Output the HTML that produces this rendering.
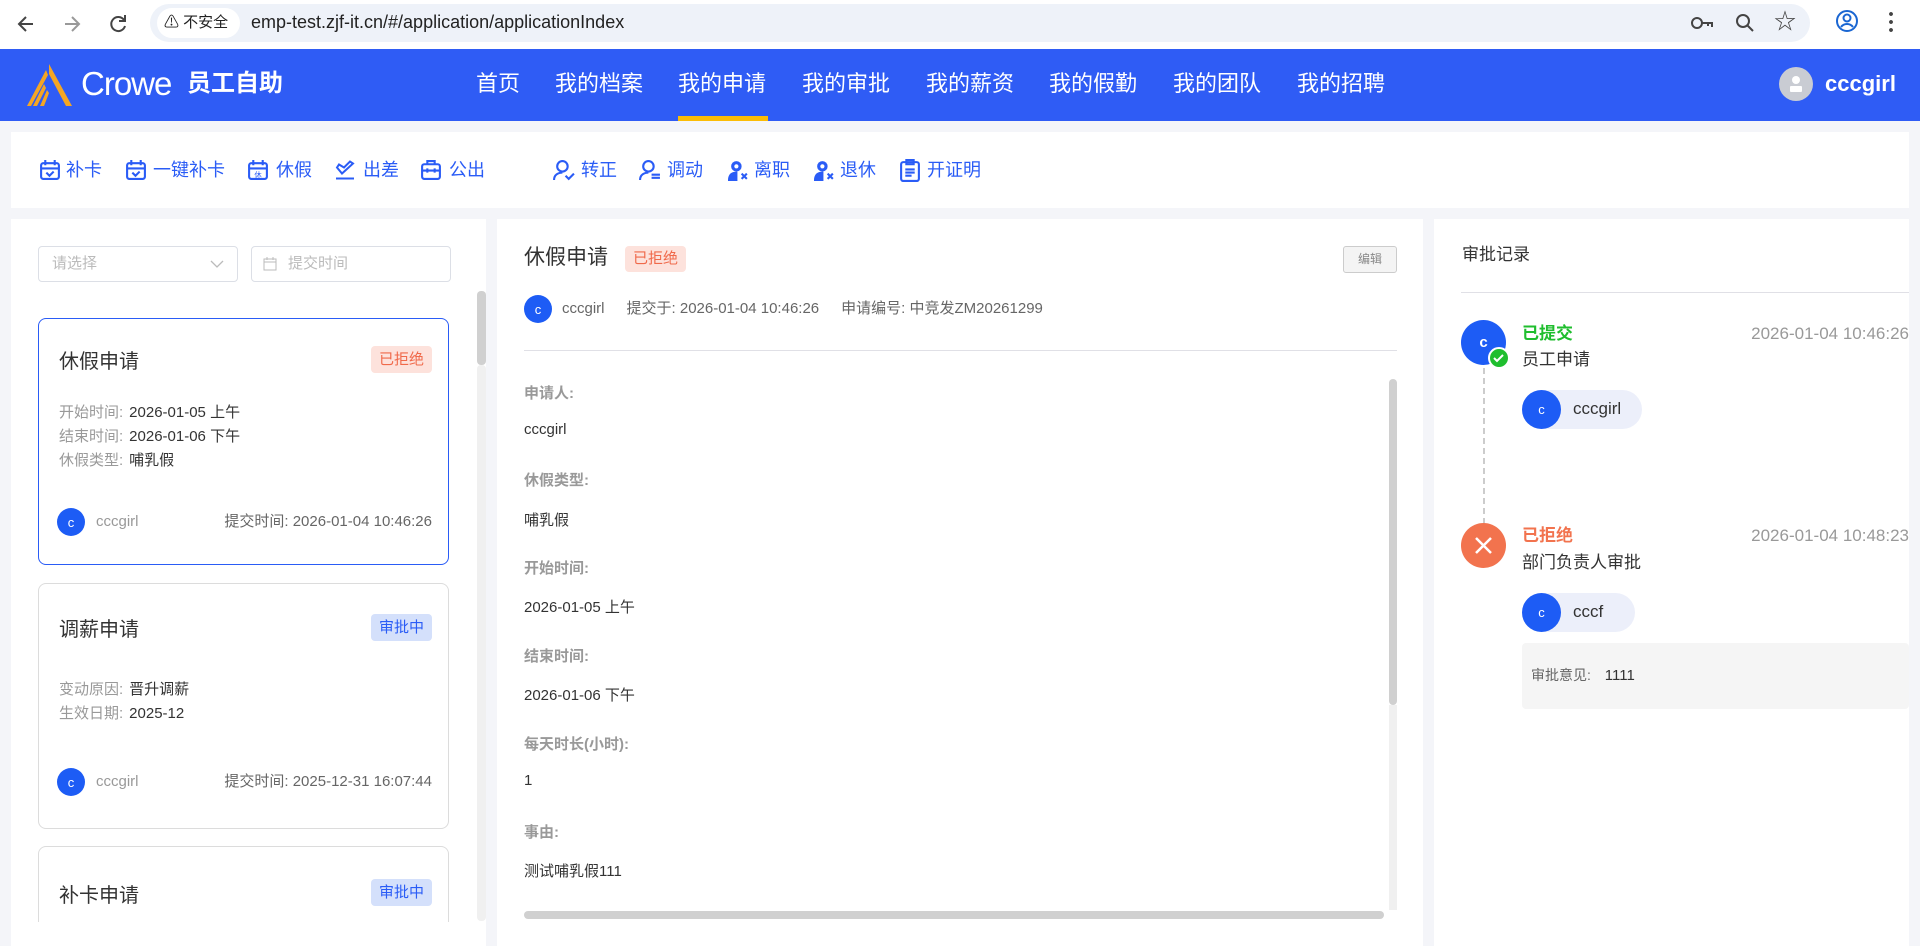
<!DOCTYPE html>
<html><head><meta charset="utf-8"><style>
*{box-sizing:border-box;margin:0;padding:0}
html,body{width:1920px;height:946px;overflow:hidden}
body{background:#f4f5f9;font-family:"Liberation Sans","Noto Sans CJK SC",sans-serif;color:#333;position:relative}
.abs{position:absolute}
.chrome{left:0;top:0;width:1920px;height:49px;background:#fff}
.addr{left:150px;top:4px;width:1660px;height:38px;background:#eef2f9;border-radius:19px}
.hdr{left:0;top:49px;width:1920px;height:72px;background:#2f5cf5}
.nav{top:68px;color:#fff;font-size:22px;line-height:32px}
.tb{left:11px;top:132px;width:1898px;height:76px;background:#fff}
.ti{top:157px;color:#2a5cf6;font-size:18px;line-height:26px;height:26px}
.ti svg{position:absolute;top:2px}
.ti span{position:absolute;white-space:nowrap}
.panel{background:#fff}
.card{left:38px;width:411px;border:1px solid #dcdcdc;border-radius:8px;background:#fff}
.card.sel{border-color:#2a5cf6}
.ct{position:absolute;left:20px;font-size:20px;color:#333}
.badge{position:absolute;font-size:15px;border-radius:4px;padding:0 8px;line-height:27px}
.red{background:#fde2dc;color:#f0694a}
.blue{background:#d4e0fb;color:#2a5cf6}
.f{position:absolute;left:20px;font-size:15px;line-height:24px;color:#999}
.f b{font-weight:normal;color:#333;margin-left:6px}
.av{border-radius:50%;background:#1d5cf5;color:#fff;display:flex;align-items:center;justify-content:center;font-size:13px}
.lab{left:524px;font-size:15px;color:#999;font-weight:bold}
.val{left:524px;font-size:15px;color:#333}
</style></head><body>
<div class="abs chrome"></div>
<div class="abs addr"></div>
<svg class="abs" style="left:14px;top:12px" width="24" height="24" viewBox="0 0 24 24"><path d="M19 12H6M12 5l-7 7 7 7" fill="none" stroke="#444" stroke-width="2"/></svg>
<svg class="abs" style="left:60px;top:12px" width="24" height="24" viewBox="0 0 24 24"><path d="M5 12h13M12 5l7 7-7 7" fill="none" stroke="#999" stroke-width="2"/></svg>
<svg class="abs" style="left:106px;top:12px" width="24" height="24" viewBox="0 0 24 24"><path d="M18 8a7 7 0 1 0 1 6" fill="none" stroke="#444" stroke-width="2"/><path d="M19 3v6h-6" fill="none" stroke="#444" stroke-width="2"/></svg>
<div class="abs" style="left:157px;top:8px;width:83px;height:30px;background:#fff;border-radius:15px"></div>
<div class="abs" style="left:164px;top:12px;font-size:15px;line-height:22px;color:#222">⚠ 不安全</div>
<div class="abs" style="left:251px;top:10px;font-size:18px;line-height:24px;color:#222">emp-test.zjf-it.cn/#/application/applicationIndex</div>
<svg class="abs" style="left:1690px;top:14px" width="24" height="18" viewBox="0 0 24 18"><circle cx="7" cy="9" r="5" fill="none" stroke="#444" stroke-width="2"/><path d="M12 9h10v4M18 9v3" fill="none" stroke="#444" stroke-width="2"/></svg>
<svg class="abs" style="left:1734px;top:12px" width="22" height="22" viewBox="0 0 22 22"><circle cx="9" cy="9" r="6" fill="none" stroke="#444" stroke-width="2"/><path d="M13 13l6 6" stroke="#444" stroke-width="2"/></svg>
<div class="abs" style="left:1774px;top:7px;font-size:22px;line-height:30px;color:#444">☆</div>
<svg class="abs" style="left:1834px;top:8px" width="26" height="26" viewBox="0 0 26 26"><circle cx="13" cy="13" r="10" fill="none" stroke="#1a66d2" stroke-width="2"/><circle cx="13" cy="10" r="3.5" fill="none" stroke="#1a66d2" stroke-width="2"/><path d="M7 19c3-4 9-4 12 0" fill="none" stroke="#1a66d2" stroke-width="2"/></svg>
<div class="abs" style="left:1889px;top:10px;width:4px;height:24px;background:radial-gradient(circle,#444 1.8px,transparent 2px) 0 0/4px 8px"></div>

<div class="abs hdr"></div>
<svg class="abs" style="left:24px;top:62px" width="50" height="46" viewBox="0 0 50 46"><path d="M25 2L48 44H42L25 12Z" fill="#f5a623"/><path d="M22 8L3 44h4L24 13Z" fill="#f5a623"/><path d="M20 22L9 44h4l9-18Z" fill="#f5a623"/><path d="M23 28L16 44h4l5-13Z" fill="#f5a623"/></svg>
<div class="abs" style="left:81px;top:64px;font-size:33px;line-height:40px;color:#fff;letter-spacing:-1px">Crowe</div>
<div class="abs" style="left:187px;top:68px;font-size:24px;line-height:32px;color:#fff;font-weight:bold">员工自助</div>
<div class="abs nav" style="left:476px">首页</div>
<div class="abs nav" style="left:555px">我的档案</div>
<div class="abs nav" style="left:678px">我的申请</div>
<div class="abs" style="left:678px;top:116px;width:90px;height:5px;background:#fbbc05"></div>
<div class="abs nav" style="left:802px">我的审批</div>
<div class="abs nav" style="left:926px">我的薪资</div>
<div class="abs nav" style="left:1049px">我的假勤</div>
<div class="abs nav" style="left:1173px">我的团队</div>
<div class="abs nav" style="left:1297px">我的招聘</div>
<div class="abs" style="left:1779px;top:67px;width:34px;height:34px;border-radius:50%;background:#c9ccd3"></div>
<svg class="abs" style="left:1787px;top:74px" width="18" height="20" viewBox="0 0 18 20"><circle cx="9" cy="6" r="4" fill="#fff"/><rect x="3" y="12" width="12" height="6" rx="1" fill="#fff"/></svg>
<div class="abs" style="left:1825px;top:69px;font-size:22px;line-height:30px;color:#fff;font-weight:bold">cccgirl</div>

<div class="abs tb"></div>
<div class="abs ti" style="left:39px"><svg width="22" height="22" viewBox="0 0 21 21"><rect x="2" y="4" width="17" height="15" rx="2" fill="none" stroke="#2a5cf6" stroke-width="2"/><path d="M6 1v5M15 1v5M2 9h17M7 13l3 3 4-4" fill="none" stroke="#2a5cf6" stroke-width="2"/></svg><span style="left:27px">补卡</span></div>
<div class="abs ti" style="left:125px"><svg width="22" height="22" viewBox="0 0 21 21"><rect x="2" y="4" width="17" height="15" rx="2" fill="none" stroke="#2a5cf6" stroke-width="2"/><path d="M6 1v5M15 1v5M2 9h17M7 13l3 3 4-4" fill="none" stroke="#2a5cf6" stroke-width="2"/></svg><span style="left:28px">一键补卡</span></div>
<div class="abs ti" style="left:247px"><svg width="22" height="22" viewBox="0 0 21 21"><rect x="2" y="4" width="17" height="15" rx="2" fill="none" stroke="#2a5cf6" stroke-width="2"/><path d="M6 1v5M15 1v5M2 9h17" fill="none" stroke="#2a5cf6" stroke-width="2"/><text x="10.5" y="17.5" font-size="7" fill="#2a5cf6" text-anchor="middle" font-family="Noto Sans CJK SC">休</text></svg><span style="left:29px">休假</span></div>
<div class="abs ti" style="left:334px"><svg width="22" height="22" viewBox="0 0 22 21"><path d="M3 8l5 6 11-10-3-2-6 6-5-3z" fill="none" stroke="#2a5cf6" stroke-width="2"/><path d="M2 19h18" stroke="#2a5cf6" stroke-width="2"/></svg><span style="left:29px">出差</span></div>
<div class="abs ti" style="left:420px"><svg width="22" height="22" viewBox="0 0 21 21"><rect x="2" y="5" width="17" height="14" rx="2" fill="none" stroke="#2a5cf6" stroke-width="2"/><path d="M7 5V2h7v3M2 11h17M7 9v4M14 9v4" fill="none" stroke="#2a5cf6" stroke-width="2"/></svg><span style="left:29px">公出</span></div>
<div class="abs ti" style="left:553px"><svg width="22" height="22" viewBox="0 0 21 21"><circle cx="9" cy="7" r="5" fill="none" stroke="#2a5cf6" stroke-width="2"/><path d="M1 20c0-5 4-7 8-7M12 16l3 3 5-5" fill="none" stroke="#2a5cf6" stroke-width="2"/></svg><span style="left:28px">转正</span></div>
<div class="abs ti" style="left:639px"><svg width="22" height="22" viewBox="0 0 21 21"><circle cx="9" cy="7" r="5" fill="none" stroke="#2a5cf6" stroke-width="2"/><path d="M1 20c0-5 4-7 8-7M12 15h8M12 18h8" fill="none" stroke="#2a5cf6" stroke-width="2"/></svg><span style="left:28px">调动</span></div>
<div class="abs ti" style="left:728px"><svg width="22" height="22" viewBox="0 0 21 21"><circle cx="8" cy="7" r="5" fill="#2a5cf6"/><path d="M1 20c0-5 3-7 7-7v7zM13 14l5 5M18 14l-5 5" fill="#2a5cf6" stroke="#2a5cf6" stroke-width="2"/><circle cx="8" cy="7" r="2" fill="#fff"/></svg><span style="left:26px">离职</span></div>
<div class="abs ti" style="left:814px"><svg width="22" height="22" viewBox="0 0 21 21"><circle cx="8" cy="7" r="5" fill="#2a5cf6"/><path d="M1 20c0-5 3-7 7-7v7zM13 14l5 5M18 14l-5 5" fill="#2a5cf6" stroke="#2a5cf6" stroke-width="2"/><circle cx="8" cy="7" r="2" fill="#fff"/></svg><span style="left:26px">退休</span></div>
<div class="abs ti" style="left:899px"><svg width="22" height="23" viewBox="0 0 21 22"><rect x="2" y="3" width="17" height="18" rx="2" fill="none" stroke="#2a5cf6" stroke-width="2"/><path d="M7 1h7v4H7zM6 10h9M6 13h9M6 16h6" fill="none" stroke="#2a5cf6" stroke-width="2"/></svg><span style="left:28px">开证明</span></div>

<!-- left panel -->
<div class="abs panel" style="left:11px;top:219px;width:475px;height:727px"></div>
<div class="abs" style="left:38px;top:246px;width:200px;height:36px;border:1px solid #dcdfe6;border-radius:4px;font-size:15px;color:#bbb;line-height:34px;padding-left:13px">请选择</div>
<svg class="abs" style="left:210px;top:259px" width="14" height="10" viewBox="0 0 14 10"><path d="M1 2l6 6 6-6" fill="none" stroke="#bbb" stroke-width="1.3"/></svg>
<div class="abs" style="left:251px;top:246px;width:200px;height:36px;border:1px solid #dcdfe6;border-radius:4px;font-size:15px;color:#bbb;line-height:34px;padding-left:36px">提交时间</div>
<svg class="abs" style="left:263px;top:257px" width="14" height="14" viewBox="0 0 14 14"><rect x="1" y="2" width="12" height="11" fill="none" stroke="#bbb"/><path d="M1 5h12M4 0v3M10 0v3" stroke="#bbb"/></svg>
<div class="abs" style="left:477px;top:291px;width:9px;height:74px;background:#d0d0d0;border-radius:4px"></div>
<div class="abs" style="left:477px;top:365px;width:9px;height:556px;background:#f0f0f0;border-radius:4px"></div>
<div class="abs" style="left:11px;top:219px;width:475px;height:703px;overflow:hidden">
<div class="abs card sel" style="left:27px;top:99px;height:247px">
 <div class="ct" style="top:26px">休假申请</div>
 <div class="badge red" style="right:16px;top:27px">已拒绝</div>
 <div class="f" style="top:82px">开始时间:<b>2026-01-05 上午</b></div>
 <div class="f" style="top:106px">结束时间:<b>2026-01-06 下午</b></div>
 <div class="f" style="top:130px">休假类型:<b>哺乳假</b></div>
 <div class="abs av" style="left:18px;top:189px;width:28px;height:28px">c</div>
 <div class="f" style="left:57px;top:191px">cccgirl</div>
 <div class="f" style="left:auto;right:16px;top:191px;color:#666">提交时间: 2026-01-04 10:46:26</div>
</div>
<div class="abs card" style="left:27px;top:364px;height:246px">
 <div class="ct" style="top:29px">调薪申请</div>
 <div class="badge blue" style="right:16px;top:30px">审批中</div>
 <div class="f" style="top:94px">变动原因:<b>晋升调薪</b></div>
 <div class="f" style="top:118px">生效日期:<b>2025-12</b></div>
 <div class="abs av" style="left:18px;top:184px;width:28px;height:28px">c</div>
 <div class="f" style="left:57px;top:186px">cccgirl</div>
 <div class="f" style="left:auto;right:16px;top:186px;color:#666">提交时间: 2025-12-31 16:07:44</div>
</div>
<div class="abs card" style="left:27px;top:627px;height:200px">
 <div class="ct" style="top:32px">补卡申请</div>
 <div class="badge blue" style="right:16px;top:32px">审批中</div>
</div>
</div>

<!-- middle -->
<div class="abs panel" style="left:497px;top:219px;width:926px;height:727px"></div>
<div class="abs" style="left:524px;top:244px;font-size:21px;line-height:28px;color:#333">休假申请</div>
<div class="abs badge red" style="left:625px;top:246px;line-height:26px">已拒绝</div>
<div class="abs" style="left:1343px;top:246px;width:54px;height:27px;border:1px solid #ccc;border-radius:3px;background:#f4f4f4;font-size:12px;color:#888;text-align:center;line-height:25px">编辑</div>
<div class="abs av" style="left:524px;top:295px;width:28px;height:28px">c</div>
<div class="abs" style="left:562px;top:299px;font-size:15px;line-height:20px;color:#666">cccgirl<span style="margin-left:22px">提交于: 2026-01-04 10:46:26</span><span style="margin-left:22px">申请编号: 中竞发ZM20261299</span></div>
<div class="abs" style="left:524px;top:350px;width:873px;height:1px;background:#e0e0e6"></div>
<div class="abs" style="left:1389px;top:379px;width:8px;height:326px;background:#d0d0d0;border-radius:4px"></div>
<div class="abs" style="left:1389px;top:705px;width:8px;height:205px;background:#f0f0f0"></div>
<div class="abs" style="left:524px;top:911px;width:860px;height:8px;background:#d0d0d0;border-radius:4px"></div>
<div class="abs lab" style="top:382px">申请人:</div>
<div class="abs val" style="top:421px">cccgirl</div>
<div class="abs lab" style="top:469px">休假类型:</div>
<div class="abs val" style="top:509px">哺乳假</div>
<div class="abs lab" style="top:557px">开始时间:</div>
<div class="abs val" style="top:596px">2026-01-05 上午</div>
<div class="abs lab" style="top:645px">结束时间:</div>
<div class="abs val" style="top:684px">2026-01-06 下午</div>
<div class="abs lab" style="top:733px">每天时长(小时):</div>
<div class="abs val" style="top:772px">1</div>
<div class="abs lab" style="top:821px">事由:</div>
<div class="abs val" style="top:860px">测试哺乳假111</div>

<!-- right -->
<div class="abs panel" style="left:1434px;top:219px;width:475px;height:727px"></div>
<div class="abs" style="left:1462px;top:244px;font-size:17px;line-height:22px;color:#333">审批记录</div>
<div class="abs" style="left:1461px;top:292px;width:448px;height:1px;background:#e0e0e6"></div>
<div class="abs" style="left:1483px;top:368px;width:0;height:156px;border-left:2px dashed #ccc"></div>
<div class="abs av" style="left:1461px;top:320px;width:45px;height:45px;font-weight:bold;font-size:15px">c</div>
<div class="abs" style="left:1488px;top:347px;width:22px;height:22px;border-radius:50%;background:#1fbe2e;border:2px solid #fff"></div>
<svg class="abs" style="left:1492px;top:352px" width="14" height="12" viewBox="0 0 14 12"><path d="M2 6l3 3 6-6" fill="none" stroke="#fff" stroke-width="2"/></svg>
<div class="abs" style="left:1522px;top:323px;font-size:17px;line-height:22px;color:#1fbe2e;font-weight:bold">已提交</div>
<div class="abs" style="right:11px;top:323px;font-size:17px;line-height:22px;color:#999">2026-01-04 10:46:26</div>
<div class="abs" style="left:1522px;top:349px;font-size:17px;line-height:22px;color:#333">员工申请</div>
<div class="abs" style="left:1522px;top:390px;width:120px;height:39px;border-radius:20px;background:#eceffa"></div>
<div class="abs av" style="left:1522px;top:390px;width:39px;height:39px">c</div>
<div class="abs" style="left:1573px;top:398px;font-size:17px;line-height:22px;color:#333">cccgirl</div>
<div class="abs" style="left:1461px;top:523px;width:45px;height:45px;border-radius:50%;background:#f2734e"></div>
<svg class="abs" style="left:1473px;top:535px" width="21" height="21" viewBox="0 0 21 21"><path d="M3 3l15 15M18 3L3 18" stroke="#fff" stroke-width="2.5"/></svg>
<div class="abs" style="left:1522px;top:525px;font-size:17px;line-height:22px;color:#f2734e;font-weight:bold">已拒绝</div>
<div class="abs" style="right:11px;top:525px;font-size:17px;line-height:22px;color:#999">2026-01-04 10:48:23</div>
<div class="abs" style="left:1522px;top:552px;font-size:17px;line-height:22px;color:#333">部门负责人审批</div>
<div class="abs" style="left:1522px;top:593px;width:113px;height:39px;border-radius:20px;background:#eceffa"></div>
<div class="abs av" style="left:1522px;top:593px;width:39px;height:39px">c</div>
<div class="abs" style="left:1573px;top:601px;font-size:17px;line-height:22px;color:#333">cccf</div>
<div class="abs" style="left:1522px;top:643px;width:387px;height:66px;background:#f5f5f5;border-radius:4px"></div>
<div class="abs" style="left:1531px;top:666px;font-size:14px;line-height:18px;color:#666">审批意见: <span style="color:#333;margin-left:10px;font-size:15px">1111</span></div>
</body></html>
